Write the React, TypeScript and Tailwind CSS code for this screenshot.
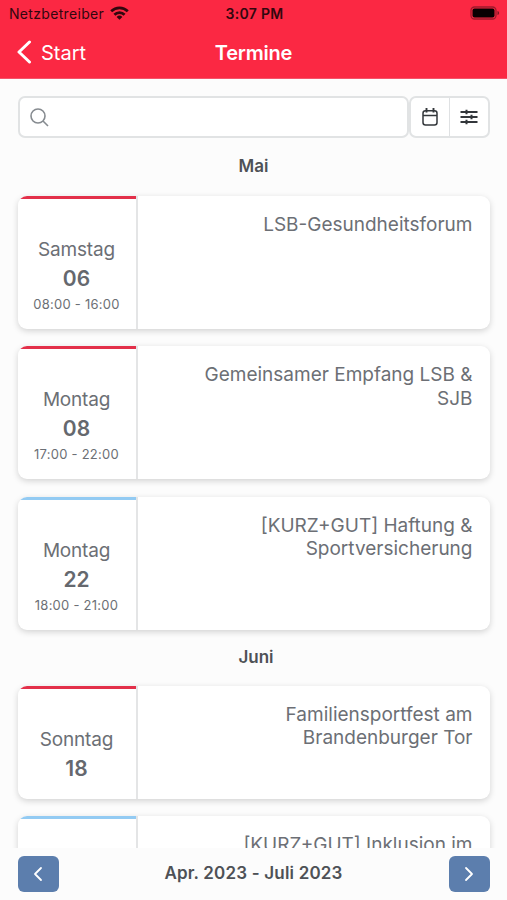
import { ChevronLeft, ChevronRight } from "lucide-react";

interface Termin {
  day?: string;
  date?: string;
  time?: string;
  title: string[];
  color: "red" | "blue";
  short?: boolean;
}

interface Month {
  name: string;
  heading: string;
  termine: Termin[];
}

const MONTHS: Month[] = [
  {
    name: "Mai",
    heading: "h-[58px] pb-[1px]",
    termine: [
      { day: "Samstag", date: "06", time: "08:00 - 16:00", title: ["LSB-Gesundheitsforum"], color: "red" },
      { day: "Montag", date: "08", time: "17:00 - 22:00", title: ["Gemeinsamer Empfang LSB &", "SJB"], color: "red" },
      { day: "Montag", date: "22", time: "18:00 - 21:00", title: ["[KURZ+GUT] Haftung &", "Sportversicherung"], color: "blue" },
    ],
  },
  {
    name: "Juni",
    heading: "h-[56px] pl-[5px]",
    termine: [
      { day: "Sonntag", date: "18", title: ["Familiensportfest am", "Brandenburger Tor"], color: "red", short: true },
      { title: ["[KURZ+GUT] Inklusion im"], color: "blue" },
    ],
  },
];

function StatusBar() {
  return (
    <div className="grid h-[27px] grid-cols-3 items-center pr-[7px] pl-[9px] text-[14px] text-[#32070e]">
      <div className="flex items-center gap-[6px]">
        <span className="tracking-[0.32px]">Netzbetreiber</span>
        <svg className="-mt-[2px] h-[14px] w-[19px] shrink-0" viewBox="0 0 19 14">
          <g fill="none" stroke="currentColor" strokeWidth="2.7">
            <path d="M1.2 5.3a11.8 11.8 0 0 1 16.6 0" />
            <path d="M4.4 8.7a7.2 7.2 0 0 1 10.2 0" />
          </g>
          <path d="M9.5 13.8 6.6 10.9a4.1 4.1 0 0 1 5.8 0Z" fill="currentColor" />
        </svg>
      </div>
      <span className="text-center font-semibold tracking-[0.3px]">3:07 PM</span>
      <svg className="-mt-[2px] h-[14px] w-[30px] justify-self-end" viewBox="0 0 30 14">
        <rect x="1" y="1" width="25" height="12" rx="3.5" fill="none" stroke="#9d1a2c" strokeWidth="1.3" />
        <rect x="2.5" y="2.5" width="22" height="9" rx="2" fill="#080002" />
        <path d="M27.5 5v4c1-.4 1.6-1.1 1.6-2s-.6-1.6-1.6-2Z" fill="#7d1724" />
      </svg>
    </div>
  );
}

function NavBar() {
  return (
    <div className="grid h-[51px] grid-cols-3 items-center px-[17px] text-[20px] text-white">
      <button className="flex items-center gap-[9px]">
        <svg className="-mt-[1px] h-[24px] w-[15px]" viewBox="0 0 15 24" fill="none" stroke="currentColor" strokeWidth="3" strokeLinecap="round" strokeLinejoin="round">
          <path d="M12.5 2 2 12l10.5 10" />
        </svg>
        <span>Start</span>
      </button>
      <h1 className="text-center font-semibold tracking-[-0.2px]">Termine</h1>
    </div>
  );
}

function SearchRow() {
  return (
    <div className="flex h-[42px] shrink-0">
      <div className="flex flex-1 items-center rounded-[7px] border-2 border-[#e1e3e4] bg-white pl-[10px]">
        <svg className="h-[19px] w-[19px] text-[#868b90]" viewBox="0 0 19 19" fill="none" stroke="currentColor" strokeWidth="1.6">
          <circle cx="8" cy="8" r="7" />
          <path d="m13 13 5 5" />
        </svg>
      </div>
      <div className="flex w-[81px] rounded-[7px] border-2 border-[#e1e3e4] bg-white text-[#33373b]">
        <button className="flex flex-1 items-center justify-center border-r-[1.5px] border-[#dfe1e3]">
          <svg className="h-[18px] w-[16px]" viewBox="0 0 16 18" fill="none" stroke="currentColor" strokeWidth="1.5">
            <rect x="1" y="2.8" width="14" height="14.2" rx="2.5" />
            <path d="M1 7.5h14" />
            <path d="M4.5 0v4.5M11.5 0v4.5" strokeWidth="1.9" />
          </svg>
        </button>
        <button className="flex flex-1 items-center justify-center">
          <svg className="h-[16px] w-[18px]" viewBox="0 0 18 16" fill="none" stroke="currentColor" strokeWidth="1.8">
            <path d="M0.5 3h17M0.5 8h17M0.5 13h17" />
            <path d="M6.5 0.7v4.6M11.5 5.7v4.6M6.5 10.7v4.6" strokeWidth="2" />
          </svg>
        </button>
      </div>
    </div>
  );
}

function TerminCard({ termin }: { termin: Termin }) {
  return (
    <div className={`flex shrink-0 overflow-hidden rounded-[9px] bg-white text-[#6c6f75] shadow-[0_2px_6px_rgba(0,0,0,0.17)] ${termin.short ? "h-[113px]" : "h-[133px]"}`}>
      <div className={`flex w-[118px] flex-col items-center border-t-[3px] pt-[36px] ${termin.color === "red" ? "border-[#e3304a]" : "border-[#93cbf3]"}`}>
        <span className="text-[19px] leading-[29px] tracking-[-0.2px]">{termin.day}</span>
        <span className="text-[21px] leading-[30px] font-semibold text-[#65686e]">{termin.date}</span>
        {termin.time && (
          <span className="text-[13px] leading-[21px] tracking-[0.25px]">{termin.time}</span>
        )}
      </div>
      <div className="flex-1 border-l-2 border-[#e4e5e6] pt-[17px] pr-[17px] text-right text-[19px] leading-[23.3px]">
        {termin.title.map((line) => (
          <div key={line}>{line}</div>
        ))}
      </div>
    </div>
  );
}

export default function App() {
  return (
    <div className="flex h-[900px] w-full flex-col overflow-hidden bg-[#fcfcfc] font-['Inter',sans-serif]">
      <header className="h-[79px] shrink-0 border-b border-[#f4536a] bg-[#fb2843]">
        <StatusBar />
        <NavBar />
      </header>

      <main className="flex min-h-0 flex-1 flex-col overflow-hidden px-[17.5px] pt-[17px]">
        <SearchRow />
        {MONTHS.map((month) => (
          <section key={month.name} className="shrink-0">
            <h2 className={`flex items-center justify-center text-[17px] font-semibold text-[#4e5156] ${month.heading}`}>
              {month.name}
            </h2>
            <div className="flex flex-col gap-[17.3px]">
              {month.termine.map((termin) => (
                <TerminCard key={termin.title[0]} termin={termin} />
              ))}
            </div>
          </section>
        ))}
      </main>

      {/* Period switcher */}
      <footer className="flex h-[52px] shrink-0 items-center justify-between px-[17.5px] text-[#4e5156]">
        <button className="flex h-[36px] w-[41px] items-center justify-center rounded-[6px] bg-[#5c7ead] text-white">
          <ChevronLeft className="h-[24px] w-[24px]" strokeWidth={1.8} />
        </button>
        <span className="text-[17px] font-semibold tracking-[0.18px]">Apr. 2023 - Juli 2023</span>
        <button className="flex h-[36px] w-[41px] items-center justify-center rounded-[6px] bg-[#5c7ead] text-white">
          <ChevronRight className="h-[24px] w-[24px]" strokeWidth={1.8} />
        </button>
      </footer>
    </div>
  );
}
